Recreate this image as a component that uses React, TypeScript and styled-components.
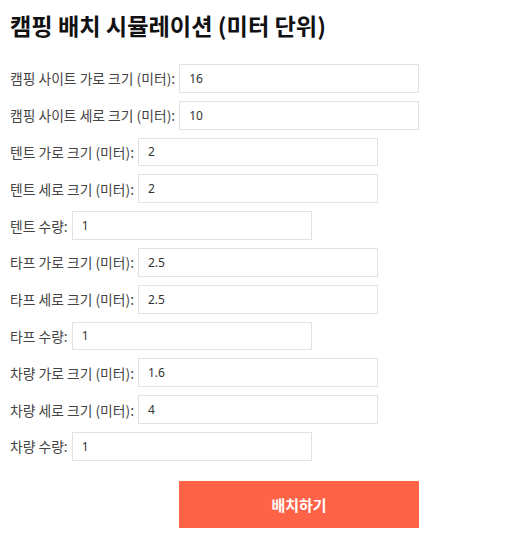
import styled, { createGlobalStyle } from 'styled-components';

const GlobalStyle = createGlobalStyle`
  body {
    margin: 0;
    background: #fff;
    font-family: 'Noto Sans CJK KR', 'Noto Sans', sans-serif;
  }
`;

const fields = [
  { label: '캠핑 사이트 가로 크기 (미터):', value: '16' },
  { label: '캠핑 사이트 세로 크기 (미터):', value: '10' },
  { label: '텐트 가로 크기 (미터):', value: '2' },
  { label: '텐트 세로 크기 (미터):', value: '2' },
  { label: '텐트 수량:', value: '1' },
  { label: '타프 가로 크기 (미터):', value: '2.5' },
  { label: '타프 세로 크기 (미터):', value: '2.5' },
  { label: '타프 수량:', value: '1' },
  { label: '차량 가로 크기 (미터):', value: '1.6' },
  { label: '차량 세로 크기 (미터):', value: '4' },
  { label: '차량 수량:', value: '1' },
];

const App = () => {
  return (
    <Page>
      <GlobalStyle />
      <Title>캠핑 배치 시뮬레이션 (미터 단위)</Title>
      <Form>
        {fields.map((f) => (
          <Row key={f.label}>
            <Label>{f.label}</Label>
            <Input type="text" defaultValue={f.value} />
          </Row>
        ))}
      </Form>
      <SubmitButton>배치하기</SubmitButton>
    </Page>
  );
};

export default App;

const Page = styled.div`
  padding: 10px;
`;

const Title = styled.h2`
  margin: 0 0 24px;
  font-size: 23.2px;
  font-weight: 700;
  line-height: 30px;
  color: #111;
`;

const Form = styled.div`
  display: flex;
  flex-direction: column;
  gap: 8px;
`;

const Row = styled.div`
  display: flex;
  align-items: center;
  gap: 4px;
  height: 28.8px;
`;

const Label = styled.label`
  font-size: 13.8px;
  color: #444;
  white-space: nowrap;
`;

const Input = styled.input`
  box-sizing: border-box;
  width: 240px;
  height: 28.8px;
  padding: 0 9px;
  border: 1px solid #e2e2e2;
  font-family: 'Noto Sans', sans-serif;
  font-size: 12px;
  color: #333;
  outline: none;
`;

const SubmitButton = styled.button`
  display: block;
  margin: 20px 0 0 169px;
  width: 240px;
  height: 47px;
  border: none;
  background: #ff6347;
  color: #fff;
  font-family: 'Noto Sans CJK KR', sans-serif;
  font-size: 15px;
  font-weight: 700;
  cursor: pointer;
`;
